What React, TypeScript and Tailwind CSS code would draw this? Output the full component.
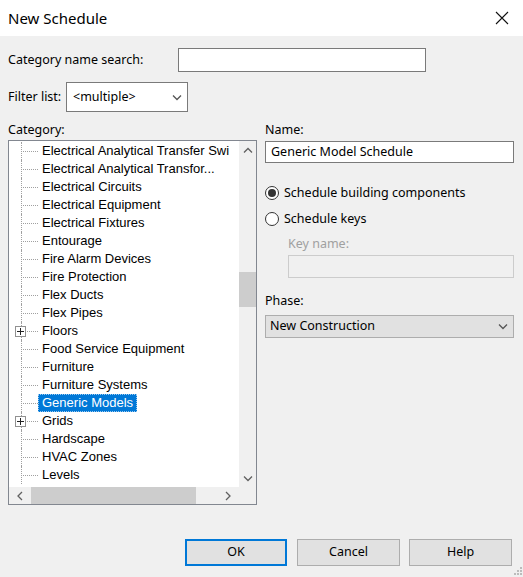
import React from "react";

const items: { t: string; plus?: boolean; sel?: boolean }[] = [
  { t: "Electrical Analytical Transfer Swi" },
  { t: "Electrical Analytical Transfor..." },
  { t: "Electrical Circuits" },
  { t: "Electrical Equipment" },
  { t: "Electrical Fixtures" },
  { t: "Entourage" },
  { t: "Fire Alarm Devices" },
  { t: "Fire Protection" },
  { t: "Flex Ducts" },
  { t: "Flex Pipes" },
  { t: "Floors", plus: true },
  { t: "Food Service Equipment" },
  { t: "Furniture" },
  { t: "Furniture Systems" },
  { t: "Generic Models", sel: true },
  { t: "Grids", plus: true },
  { t: "Hardscape" },
  { t: "HVAC Zones" },
  { t: "Levels" },
];

const Chevron = ({ dir, className = "" }: { dir: "up" | "down" | "left" | "right"; className?: string }) => {
  const pts: Record<string, string> = {
    down: "1,1.5 5,5.5 9,1.5",
    up: "1,5.5 5,1.5 9,5.5",
    left: "6,1 2,5 6,9",
    right: "2,1 6,5 2,9",
  };
  const vertical = dir === "up" || dir === "down";
  return (
    <svg width={vertical ? 10 : 8} height={vertical ? 7 : 10} viewBox={vertical ? "0 0 10 7" : "0 0 8 10"} className={className}>
      <polyline points={pts[dir]} fill="none" stroke="currentColor" strokeWidth="1.3" />
    </svg>
  );
};

const ui = { fontFamily: '"Noto Sans", "Open Sans", sans-serif' };
const tree = { fontFamily: '"Liberation Sans", Arial, sans-serif' };

export default function App() {
  return (
    <div className="w-[523px] h-[577px] bg-[#f0f0f0] text-black overflow-hidden relative" style={ui}>
      {/* title bar */}
      <div className="h-[36px] bg-white flex items-center justify-between pl-[8px] pr-[14px]">
        <span className="text-[15px] leading-none">New Schedule</span>
        <svg width="14" height="14" viewBox="0 0 14 14">
          <path d="M1 1 L13 13 M13 1 L1 13" stroke="#111" strokeWidth="1.1" />
        </svg>
      </div>

      <div className="px-[8px]">
        {/* search row */}
        <div className="mt-[12px] h-[24px] flex items-center">
          <span className="w-[170px] text-[12.5px]">Category name search:</span>
          <div className="w-[248px] h-[24px] bg-white border border-[#7a7a7a]" />
        </div>

        {/* filter row */}
        <div className="mt-[10px] h-[30px] flex items-center">
          <span className="w-[58px] text-[12.5px]">Filter list:</span>
          <div className="w-[122px] h-[30px] bg-white border border-[#7a7a7a] flex items-center justify-between pl-[6px] pr-[5px]">
            <span className="text-[12.5px]">&lt;multiple&gt;</span>
            <Chevron dir="down" className="text-[#555]" />
          </div>
        </div>

        {/* columns */}
        <div className="mt-[8px] flex gap-[8px]">
          {/* left */}
          <div className="w-[249px] flex flex-col">
            <div className="h-[20px] flex items-center text-[12.5px]">Category:</div>
            <div className="h-[365px] border border-[#828790] bg-white flex flex-col">
              <div className="flex flex-1 min-h-0">
                <div className="flex-1 overflow-hidden pt-[1px]" style={tree}>
                  {items.map((it, i) => (
                    <div key={i} className="h-[18px] flex items-center whitespace-nowrap">
                      <div className="relative w-[29px] h-[18px] shrink-0">
                        <span className="absolute left-[12px] top-0 h-[18px] border-l border-dotted border-[#a0a0a0]" />
                        <span className="absolute left-[14px] w-[15px] top-[9px] border-t border-dotted border-[#a0a0a0]" />
                        {it.plus && (
                          <span className="absolute left-[6px] top-[4px] w-[11px] h-[11px] bg-white border border-[#919191] flex items-center justify-center">
                            <svg width="7" height="7" viewBox="0 0 7 7">
                              <path d="M0 3.5 H7 M3.5 0 V7" stroke="#222" strokeWidth="1" />
                            </svg>
                          </span>
                        )}
                      </div>
                      <span
                        className={
                          "text-[13px] leading-[18px] px-[4px] " +
                          (it.sel ? "bg-[#0078d7] text-white outline outline-1 outline-dotted outline-[#9ccaf0] -outline-offset-1" : "")
                        }
                      >
                        {it.t}
                      </span>
                    </div>
                  ))}
                </div>
                {/* vertical scrollbar */}
                <div className="w-[17px] bg-[#f0f0f0] flex flex-col items-center">
                  <div className="h-[19px] w-full flex items-center justify-center text-[#606060]">
                    <Chevron dir="up" />
                  </div>
                  <div className="mt-[112px] w-[17px] h-[35px] bg-[#cdcdcd]" />
                  <div className="flex-1" />
                  <div className="h-[17px] w-full flex items-center justify-center text-[#606060]">
                    <Chevron dir="down" />
                  </div>
                </div>
              </div>
              {/* horizontal scrollbar */}
              <div className="h-[17px] flex">
                <div className="flex-1 bg-[#f0f0f0] flex items-center">
                  <div className="w-[22px] h-[17px] flex items-center justify-center text-[#606060]">
                    <Chevron dir="left" />
                  </div>
                  <div className="w-[165px] h-[17px] bg-[#cdcdcd]" />
                  <div className="flex-1" />
                  <div className="w-[22px] h-[17px] flex items-center justify-center text-[#606060]">
                    <Chevron dir="right" />
                  </div>
                </div>
                <div className="w-[17px] bg-[#f0f0f0]" />
              </div>
            </div>
          </div>

          {/* right */}
          <div className="w-[249px] flex flex-col">
            <div className="h-[21px] flex items-center text-[12.5px]">Name:</div>
            <div className="h-[22px] bg-white border border-[#7a7a7a] flex items-center pl-[5px] text-[12.5px]">
              Generic Model Schedule
            </div>

            <div className="mt-[21px] h-[18px] flex items-center">
              <span className="w-[14px] h-[14px] rounded-full border border-[#333] flex items-center justify-center bg-white">
                <span className="w-[8px] h-[8px] rounded-full bg-[#333]" />
              </span>
              <span className="ml-[5px] text-[12.5px]">Schedule building components</span>
            </div>
            <div className="mt-[8px] h-[18px] flex items-center">
              <span className="w-[14px] h-[14px] rounded-full border border-[#333] bg-white" />
              <span className="ml-[5px] text-[12.5px]">Schedule keys</span>
            </div>
            <div className="mt-[7px] h-[18px] flex items-center pl-[23px] text-[12.5px] text-[#a0a0a0]">Key name:</div>
            <div className="mt-[2px] ml-[23px] h-[23px] border border-[#cccccc] bg-[#f0f0f0]" />

            <div className="mt-[14px] h-[18px] flex items-center text-[12.5px]">Phase:</div>
            <div className="mt-[5px] h-[23px] bg-[#e1e1e1] border border-[#adadad] flex items-center justify-between pl-[4px] pr-[5px]">
              <span className="text-[12.5px]">New Construction</span>
              <Chevron dir="down" className="text-[#555]" />
            </div>
          </div>
        </div>

        {/* buttons */}
        <div className="mt-[34px] flex justify-end pr-[3px]">
          <button className="w-[102px] h-[27px] bg-[#e1e1e1] border-2 border-[#0078d7] text-[12.5px]">OK</button>
          <button className="ml-[10px] w-[103px] h-[27px] bg-[#e1e1e1] border border-[#adadad] text-[12.5px]">Cancel</button>
          <button className="ml-[9px] w-[103px] h-[27px] bg-[#e1e1e1] border border-[#adadad] text-[12.5px]">Help</button>
        </div>
      </div>

      {/* resize grip */}
      <svg className="absolute right-[1px] bottom-[1px]" width="10" height="10" viewBox="0 0 10 10">
        {[
          [8, 0], [8, 3], [5, 3], [8, 6], [5, 6], [2, 6],
        ].map(([x, y], i) => (
          <rect key={i} x={x} y={y + 1} width="2" height="2" fill="#bcbcbc" />
        ))}
      </svg>
    </div>
  );
}
